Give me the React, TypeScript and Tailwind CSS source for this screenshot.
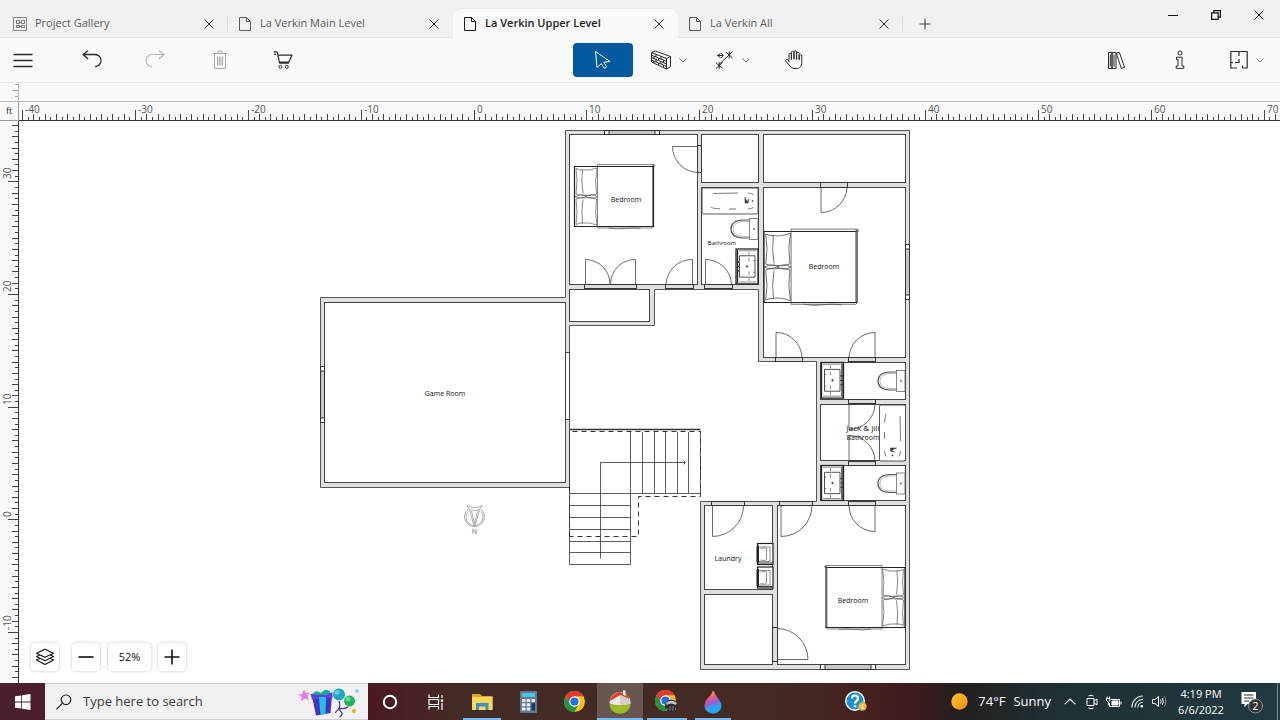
import React from "react";

type Pt = [number, number];

const range = (from: number, to: number) =>
  Array.from({ length: to - from + 1 }, (_, i) => from + i);

/* ---------- Title bar ---------- */

function PageIcon() {
  return (
    <svg width="14" height="16" viewBox="0 0 14 16" fill="none" stroke="currentColor" strokeWidth="1" className="shrink-0">
      <path d="M1.5 1.5H8.5L12.5 5.5V14.5H1.5ZM8.5 1.5V5.5H12.5" />
    </svg>
  );
}

function GalleryIcon() {
  return (
    <svg width="14" height="16" viewBox="0 0 14 16" fill="none" stroke="currentColor" strokeWidth="1" className="shrink-0">
      <path d="M0.5 1.5H13.5V14.5H0.5Z" strokeOpacity=".7" />
      <path d="M3.5 4.5H6.5V7.5H3.5ZM8.5 4.5H11.5V7.5H8.5ZM3.5 9.5H6.5V11.5H3.5ZM8.5 9.5H11.5V11.5H8.5ZM6.5 6.5H8.5M6.5 10.5H8.5" strokeOpacity=".8" />
    </svg>
  );
}

function CrossIcon() {
  return (
    <svg width="10" height="10" viewBox="0 0 10 10" fill="none" stroke="currentColor" strokeWidth="1">
      <path d="M.6.6 9.4 9.4M9.4.6.6 9.4" />
    </svg>
  );
}

function Tab({ label, active, gallery, divider }: { label: string; active?: boolean; gallery?: boolean; divider?: boolean }) {
  return (
    <div
      className={
        "relative flex h-[29px] w-[225px] min-w-0 items-center pr-[11px] pl-2.5 " +
        (active
          ? "-mb-px rounded-t-lg bg-[#f9f9f9] font-semibold text-[#1c1c1c] shadow-[0_-1px_1px_#e9e9e9]"
          : "-mb-px text-[#5c5c5c]")
      }
    >
      <button type="button" role="tab" aria-selected={!!active} className="flex min-w-0 flex-1 items-center gap-2">
        {gallery ? <GalleryIcon /> : <PageIcon />}
        <span className="truncate">{label}</span>
      </button>
      <button type="button" aria-label={"Close " + label} className="flex h-4 w-4 items-center justify-center text-[#2b2b2b]">
        <CrossIcon />
      </button>
      {divider && <span className="absolute top-1.5 right-0 h-4 w-px bg-[#dfdfdf]" />}
    </div>
  );
}

function TitleBar() {
  return (
    <header className="flex h-[38px] shrink-0 items-end justify-between border-b border-[#e6e6e6] bg-[#f1f1f1] text-[11px]">
      <div role="tablist" className="flex min-w-0 items-end pl-[3px]">
        <Tab label="Project Gallery" gallery divider />
        <Tab label="La Verkin Main Level" />
        <Tab label="La Verkin Upper Level" active />
        <Tab label="La Verkin All" divider />
        <button type="button" aria-label="New tab" className="-mb-px flex h-[29px] w-[43px] items-center justify-center text-[#444]">
          <svg width="12" height="12" viewBox="0 0 12 12" stroke="currentColor" strokeWidth="1.1">
            <path d="M6 .5V11.5M.5 6H11.5" />
          </svg>
        </button>
      </div>
      <div className="flex h-full items-start text-[#111]">
        <button type="button" aria-label="Minimize" className="flex h-[30px] w-[43px] items-center justify-center">
          <svg width="10" height="10" viewBox="0 0 10 10" stroke="currentColor"><path d="M0 5.5H10" /></svg>
        </button>
        <button type="button" aria-label="Restore" className="flex h-[30px] w-[43px] items-center justify-center">
          <svg width="10" height="10" viewBox="0 0 10 10" fill="none" stroke="currentColor" strokeWidth="1.2">
            <path d="M.6 2.8H7.2V9.4H.6ZM2.8 2.8V.6H9.4V7.2H7.2" />
          </svg>
        </button>
        <button type="button" aria-label="Close window" className="flex h-[30px] w-[43px] items-center justify-center">
          <CrossIcon />
        </button>
      </div>
    </header>
  );
}

/* ---------- Toolbar ---------- */

function Tool({ label, className, children }: { label: string; className: string; children: React.ReactNode }) {
  return (
    <button type="button" aria-label={label} className={"flex h-[34px] shrink-0 items-center justify-center " + className}>
      {children}
    </button>
  );
}

function Glyph({ children, w = 20 }: { children: React.ReactNode; w?: number }) {
  return (
    <svg width={w} height="20" viewBox={`0 0 ${w} 20`} fill="none" stroke="currentColor" strokeWidth="1" strokeLinejoin="round">
      {children}
    </svg>
  );
}

function Chevron() {
  return (
    <svg width="8" height="6" viewBox="0 0 8 6" fill="none" stroke="#777" strokeWidth="1">
      <path d="M.5 1.5 4 5 7.5 1.5" />
    </svg>
  );
}

function Toolbar() {
  return (
    <nav className="grid h-[45px] shrink-0 grid-cols-[573fr_240fr_467fr] items-center border-b border-[#ebebeb] bg-[#f9f9f9] text-[#2b2b2b]">
      <div className="flex items-center pl-[7px]">
        <Tool label="Menu" className="w-8">
          <Glyph><path d="M.5 4.5H19.5M.5 10.5H19.5M.5 16.5H19.5" strokeWidth="1.3" /></Glyph>
        </Tool>
        <Tool label="Undo" className="ml-[37px] w-8">
          <Glyph><path d="M6 .8 1 4.5 6 9M1.2 4.5H13A5.8 5.8 0 0 1 13 16.6" strokeWidth="1.3" /></Glyph>
        </Tool>
        <Tool label="Redo" className="ml-[31px] w-8 text-[#b5b5b5]">
          <Glyph><path d="M14 .8 19 4.5 14 9M18.8 4.5H7A5.8 5.8 0 0 0 7 16.6" strokeWidth="1.1" /></Glyph>
        </Tool>
        <Tool label="Delete" className="ml-[33px] w-8 text-[#a8a8a8]">
          <Glyph>
            <path d="M3 3.5H17M8 3.5V1.2H12V3.5M4.5 3.5V18.5H15.5V3.5M7.5 6.5V15.5M9.2 6.5V15.5M10.9 6.5V15.5M12.6 6.5V15.5" />
          </Glyph>
        </Tool>
        <Tool label="Cart" className="ml-[31px] w-8">
          <Glyph>
            <path d="M.8 2.4C2.6 1 4.2 1.8 4.6 3.6L6.6 13.2H16M4.9 5.2H19L15.8 12.2 6.4 12.2M1 4.4H3.2" strokeWidth="1.2" />
            <circle cx="7.4" cy="16.8" r="1.5" /><circle cx="13.8" cy="16.8" r="1.5" />
          </Glyph>
        </Tool>
      </div>
      <div className="flex items-center">
        <Tool label="Select" className="w-[60px] rounded bg-[#005a9e] text-white">
          <Glyph><path d="M2.500 1.500 17 11.500 10.800 12.300 13.800 17 11.200 18.400 8.400 13.600 4 17.500Z" /></Glyph>
        </Tool>
        <Tool label="Walls" className="ml-[11px] w-11 gap-[7px] pl-1">
          <Glyph w={22}>
            <path d="M1.5 2.5 16.5 8.5V19L1.500 12ZM1.5 2.5 5.5 1 20.5 6.5 16.5 8.5M20.5 6.5V16.8L16.5 19M1.5 5.2 16.5 11.4M1.5 7.6 16.5 14M1.5 10 16.5 16.4M6 4.3V7M11 6.4V9.2M4 6.3V8.7M8.5 8V10.6M13.5 10V12.6M6 9.5V12M11 11.6V14M4 11V13M8.5 13V15M13.5 15.2V17.5" />
          </Glyph>
          <Chevron />
        </Tool>
        <Tool label="Dimensions" className="ml-6 w-10 gap-[9px]">
          <Glyph w={18}>
            <path d="M3 15.5 14.5 4.5M1 12.8 7.5 18.300M7.500 12.500 1 18.500M4.200 12V19M11 2 17.500 8M17.500 1.500 11 8M14.200 1.500V8.500M2.500 5.500H8M6 3.200 8.500 5.500 6 7.800M5.500 3.500 2.500 5.500 5.500 7.500" />
          </Glyph>
          <Chevron />
        </Tool>
        <Tool label="Pan" className="ml-[26px] w-8">
          <Glyph>
            <path d="M5 11.8V4.6A1.2 1.2 0 0 1 7.4 4.4V9.5 2.6A1.2 1.2 0 0 1 10 2.4V9.2 2A1.2 1.2 0 0 1 12.6 2V9.5 3.5A1.2 1.2 0 0 1 15.2 3.5V9.8 6A1.2 1.2 0 0 1 17.8 6V12.5C17.8 16.5 15.5 18.6 12 18.6 8.500 18.6 7 17.5 5.2 15L1.8 11.2A1.2 1.2 0 0 1 3.4 9.6L5 11" />
          </Glyph>
        </Tool>
      </div>
      <div className="flex items-center justify-end pr-[15px]">
        <Tool label="Library" className="w-8">
          <Glyph>
            <path d="M2.500 2.500H6V18.500H2.500ZM6 2.500H10V18.500H6ZM10.300 3.200 13.300 2.300 18.500 17.300 15.300 18.400ZM8 4.500V16.500M4.300 4.500V16.500" />
          </Glyph>
        </Tool>
        <Tool label="Information" className="ml-8 w-8">
          <Glyph>
            <circle cx="10" cy="3" r="2" />
            <path d="M6.5 7.2H12V16H13.8V18.4H6.2V16H8V9.4H6.5Z" />
          </Glyph>
        </Tool>
        <Tool label="View" className="ml-[33px] w-[36px] gap-2">
          <Glyph w={18}>
            <path d="M7 18H.8V1.5H17.2V18H12.5M9 1.5V6M9 9V12.5H5M.8 12.5H3M12.5 18V15.5" strokeWidth="1.2" />
          </Glyph>
          <Chevron />
        </Tool>
      </div>
    </nav>
  );
}

/* ---------- Rulers ---------- */

function HorizontalRuler() {
  return (
    <svg className="block h-full w-full" aria-label="Horizontal ruler">
      {range(-80, 320).map((h) => {
        const x = Math.round(455.6 + h * 5.643) - 0.5;
        const len = h % 20 === 0 ? 10 : h % 2 === 0 ? 6 : 3;
        return <path key={h} d={`M${x} ${18 - len}V18`} stroke="#444" strokeWidth="1" />;
      })}
      {range(-4, 7).map((t) => (
        <text key={t} x={Math.round(455.6 + t * 112.85) + 2} y="11" fontSize="10" fill="#555">
          {t * 10}
        </text>
      ))}
    </svg>
  );
}

function VerticalRuler() {
  return (
    <svg className="block h-full w-full" aria-label="Vertical ruler">
      {range(-150, 70).map((h) => {
        const y = Math.round(398.3 - h * 5.632) + 0.5;
        const len = h % 20 === 0 ? 10 : h % 2 === 0 ? 6 : 3;
        return <path key={h} d={`M${18 - len} ${y}H18`} stroke="#444" strokeWidth="1" />;
      })}
      {range(-1, 3).map((t) => {
        const y = Math.round(398.3 - t * 112.64) - 2;
        return (
          <text key={t} x="11" y={y} transform={`rotate(-90 11 ${y})`} fontSize="10" fill="#555">
            {t * 10}
          </text>
        );
      })}
    </svg>
  );
}

/* ---------- Floor plan ---------- */

const ROOMS: [number, number, number, number][] = [
  [569.5, 134.5, 697.5, 284.5],
  [701.5, 134.5, 758.5, 182.5],
  [763.5, 134.5, 905.5, 182.5],
  [701.5, 187.5, 758.5, 284.5],
  [763.5, 187.5, 905.5, 357.5],
  [569.5, 289.5, 649.5, 321.5],
  [820.5, 362.5, 905.5, 399.5],
  [820.5, 404.5, 905.5, 460.5],
  [820.5, 465.5, 905.5, 500.5],
  [704.5, 505.5, 772.5, 589.5],
  [704.5, 594.5, 772.5, 664.5],
  [777.5, 505.5, 905.5, 664.5],
  [324.5, 302.5, 565.5, 482.5],
];

const OPENINGS: [number, number, number, number][] = [
  [584.5, 284.5, 636.5, 288.5],
  [665.5, 284.5, 693.5, 288.5],
  [704.5, 284.5, 732.5, 288.5],
  [697.5, 145.5, 701.5, 172.5],
  [820.5, 182.5, 847.5, 187.5],
  [775.5, 357.5, 802.5, 361.5],
  [848.5, 357.5, 875.5, 361.5],
  [848.5, 399.5, 875.5, 403.5],
  [848.5, 461.5, 875.5, 465.5],
  [711.5, 501.5, 744.5, 505.5],
  [779.5, 501.5, 812.5, 505.5],
  [848.5, 501.5, 875.5, 505.5],
  [772.5, 627.5, 777.5, 661.5],
];

/* hinge, end of the open leaf, latch side, sweep flag, radius */
const DOORS: [Pt, Pt, Pt, 0 | 1, number][] = [
  [[585.5, 284], [585.5, 259.5], [610, 284], 1, 24.7],
  [[635.5, 284], [635.5, 259.5], [610.5, 284], 0, 24.7],
  [[692.5, 284], [692.5, 259.5], [666, 284], 0, 26],
  [[705.5, 284], [705.5, 259.5], [731.5, 284], 1, 26],
  [[698, 146.5], [672.5, 146.5], [698, 172.5], 0, 26],
  [[821, 187], [821, 212.5], [847, 187], 0, 26],
  [[776, 357], [776, 332.5], [802, 357], 1, 26],
  [[875, 357], [875, 332.5], [849, 357], 0, 26],
  [[849, 404], [849, 429.5], [875, 404], 0, 26],
  [[849, 461], [849, 435.5], [875, 461], 1, 26],
  [[712.5, 505], [712.5, 536.5], [743.5, 505], 0, 31],
  [[781, 505], [781, 536.5], [812, 505], 0, 31],
  [[875, 505], [875, 531.5], [849, 505], 1, 26],
  [[777, 659.5], [808, 659.5], [777, 628.5], 0, 31],
];

function WindowMark({ x, y, w, h }: { x: number; y: number; w: number; h: number }) {
  const wide = w > h;
  return (
    <g stroke="#333" strokeWidth="1">
      <rect x={x} y={y} width={w} height={h} fill="#fff" />
      {wide ? (
        <rect x={x + 4.5} y={y} width={w - 9} height={h} fill="#c6c6c6" />
      ) : (
        <rect x={x} y={y + 4.5} width={w} height={h - 9} fill="#c6c6c6" />
      )}
    </g>
  );
}

/* Headboard on the left; the local box is 79 by 60. */
function Bed({ transform }: { transform: string }) {
  return (
    <g transform={transform} fill="none" stroke="#555" strokeWidth=".7">
      <rect x="0" y="0" width="79" height="60" fill="#fff" stroke="#222" strokeWidth="1.2" vectorEffect="non-scaling-stroke" />
      <path d="M23 -2H79.5V0M23 -2V61.5H78L79.5 60M34 61.5Q42 63 50 62 60 61 66 62M80.5 0V-1H78V60" />
      <path d="M1.500 2Q5 4 9 3.500 14 4.500 22.500 1.500 20 14 22 27.500 15 30 9 28.500 4 29 1.500 27.500 3.500 14 1.500 2Z" />
      <path d="M1.500 58Q5 56 9 56.500 14 55.500 22.500 58.500 20 46 22 32.500 15 30 9 31.500 4 31 1.500 32.500 3.500 46 1.500 58Z" />
      <path d="M8 3Q6.500 15 8.500 27M8 57Q6.500 45 8.500 33M.5 30Q6 27 12 29.500 6 33 .5 30M11 30Q17 26.500 23 30 17 33.500 11 30" />
    </g>
  );
}

/* Tank on the right; the local box is 28 by 21. */
function Toilet({ x, y }: { x: number; y: number }) {
  return (
    <g transform={`translate(${x} ${y})`} fill="none" stroke="#555" strokeWidth="1">
      <path d="M19 1.5H12Q0 2 0 10.5T12 19.500H19" strokeWidth="1.2" />
      <path d="M18 3H12Q2 3.500 2 10.5T12 18H18" strokeWidth=".4" />
      <rect x="18.5" y="0" width="8.5" height="21" fill="#fff" strokeWidth=".7" />
      <circle cx="23" cy="10.5" r=".7" fill="#333" strokeWidth=".4" />
    </g>
  );
}

/* The local box is 22 by 36. */
function Vanity({ transform }: { transform: string }) {
  return (
    <g transform={transform} fill="none" stroke="#222">
      <rect x="0" y="0" width="22" height="36" fill="#fff" strokeWidth="1.300" />
      <path d="M20.500 1V35" strokeWidth="1.300" />
      <path d="M1.500 1.800H19M1.500 34H19" strokeWidth=".5" />
      <path d="M18.500 7V29H3V7Z" strokeWidth=".8" />
      <path d="M9 3V6M9 9V13M9 23V27M9 30V33M3 12H5M3 24H5" strokeWidth=".5" />
      <circle cx="11" cy="18" r=".8" fill="#222" strokeWidth=".5" />
      <path d="M19 13.500H21M19 18H21M19 22.500H21" strokeWidth="1.200" />
    </g>
  );
}

/* The local box is 56 by 26. */
function Tub({ transform }: { transform: string }) {
  return (
    <g transform={transform} fill="none" stroke="#444" strokeWidth=".9">
      <rect x="0" y="0" width="56" height="26" rx="1.5" fill="#fff" />
      <path d="M11 5.5 36 5M9 19.5Q13 21 18 20.8M27 21H34M46 21Q50 20.5 51.5 19.5M46 5Q50 5.5 51.5 6.5" strokeWidth=".7" />
      <path d="M43 9 45 14 47 11 46 15 43 15Z" fill="#222" strokeWidth=".6" />
      <circle cx="50.5" cy="13" r=".7" fill="#333" strokeWidth=".4" />
    </g>
  );
}

function Appliance({ x, y }: { x: number; y: number }) {
  return (
    <g transform={`translate(${x} ${y})`} fill="none" stroke="#222">
      <rect x="1" y="0" width="15.5" height="21" fill="#fff" strokeWidth="1.2" />
      <path d="M.5 3V19M2 2V19" strokeWidth="1" />
      <path d="M2 3.5H13.5V18H2M4 5Q9 3.5 10 5V16Q9 18 4 16.5" strokeWidth=".5" />
      <path d="M1 19.500H16" strokeWidth=".9" />
    </g>
  );
}

function Stairs() {
  return (
    <g fill="none" stroke="#333" strokeWidth="1">
      <path d="M569.5 429.5H700.5" strokeWidth="1.5" />
      <path d="M569.5 431V564.5H630.5V431M569.5 493.5H700.5M700.5 431V496" strokeWidth=".8" />
      {[642.5, 654.5, 665.5, 677.5, 688.5].map((x) => <path key={x} d={`M${x} 432V493.5`} strokeWidth=".8" />)}
      {[505.5, 517.5, 529.5, 541.5, 552.5].map((y) => <path key={y} d={`M569.5 ${y}H630.5`} strokeWidth=".8" />)}
      <path d="M569.5 536.5V431.5H700.5V496.5H638.5V536.5H569.5" strokeDasharray="5 4" />
      <path d="M600.5 558.5V462.5H685.5M683.5 460.5 685.5 462.5 683.5 464.5" strokeWidth=".8" />
    </g>
  );
}

function Compass() {
  return (
    <g fill="none" stroke="#999" strokeWidth=".8">
      <path d="M468 509A10 10 0 1 0 481 509" />
      <path d="M468 511.5A8.500 8.500 0 1 0 481 511.5" />
      <path d="M467 505.500 469.500 509.500Q474.500 512 479.500 509.500L482 505.500Q474.500 510 467 505.500ZM469.500 510 474.500 527 479.500 510M471.500 511 474.500 524 477.500 511" />
      <text x="474.5" y="534" textAnchor="middle" fontSize="7" fontWeight="600" fill="#999" stroke="none">N</text>
    </g>
  );
}

const LABELS: [string, number, number, number][] = [
  ["Bedroom", 626, 202, 7],
  ["Bedroom", 824, 269, 7],
  ["Bedroom", 853, 603, 7],
  ["Bathroom", 722, 245, 6],
  ["Game Room", 445, 396, 7],
  ["Jack & Jill", 863, 431, 8],
  ["Bathroom", 863, 440, 7],
  ["Laundry", 728, 561, 7],
];

function FloorPlan() {
  return (
    <svg className="block h-full w-full" role="img" aria-label="Upper level floor plan">
      <g transform="translate(-19 -121)">
        <path
          d="M565.5 130.5H909.5V669.5H700.5V501.5H816.5V361.5H758.5V289.5H654.5V325.5H569.5V487.5H320.5V297.5H565.5Z"
          fill="#e0e0e0"
          stroke="#555"
        />
        {ROOMS.map(([x1, y1, x2, y2]) => (
          <rect key={`${x1}-${y1}`} x={x1} y={y1} width={x2 - x1} height={y2 - y1} fill="#fff" stroke="#444" />
        ))}
        <rect x="565.5" y="352.5" width="4" height="67" fill="#fff" stroke="#444" />
        <WindowMark x={604.5} y={130.5} w={55} h={4} />
        <WindowMark x={905.5} y={244.5} w={4} h={55} />
        <WindowMark x={820.5} y={664.5} w={55} h={5} />
        <WindowMark x={320.5} y={366.5} w={4} h={56} />
        {OPENINGS.map(([x1, y1, x2, y2]) => (
          <rect key={`${x1}-${y1}`} x={x1} y={y1} width={x2 - x1} height={y2 - y1} fill="#dcdcdc" stroke="#333" />
        ))}
        <Stairs />
        <Bed transform="translate(574.5 166.5)" />
        <Bed transform="translate(764 231.5) scale(1.177 1.183)" />
        <Bed transform="translate(905 567.5) scale(-1 1)" />
        <Toilet x={731} y={218.5} />
        <Toilet x={878} y={370.5} />
        <Toilet x={878} y={473} />
        <Vanity transform="translate(758 249) scale(-1 .97)" />
        <Vanity transform="translate(821.5 362.5) scale(1 .99)" />
        <Vanity transform="translate(821.5 465.5) scale(1 .97)" />
        <Tub transform="translate(702 188)" />
        <Tub transform="translate(905.5 405) rotate(90)" />
        <Appliance x={756.5} y={543.5} />
        <Appliance x={756.5} y={567} />
        {DOORS.map(([hinge, leaf, latch, sweep, r], i) => (
          <path
            key={i}
            d={`M${hinge.join(" ")}L${leaf.join(" ")}A${r} ${r} 0 0 ${sweep} ${latch.join(" ")}`}
            fill="none"
            stroke="#444"
            strokeWidth=".8"
          />
        ))}
        <Compass />
        {LABELS.map(([text, x, y, size]) => (
          <text key={`${x}-${y}`} x={x} y={y} textAnchor="middle" fontSize={size} fill="#111">
            {text}
          </text>
        ))}
      </g>
    </svg>
  );
}

function ZoomControls() {
  const box = "flex h-7 items-center justify-center rounded-sm bg-white text-[#111] shadow-[0_0_3px_rgba(0,0,0,0.25)]";
  return (
    <div className="absolute bottom-3 left-3 flex items-center">
      <button type="button" aria-label="Layers" className={box + " w-7"}>
        <svg width="20" height="18" viewBox="0 0 20 18" fill="none" stroke="currentColor" strokeWidth="1.1" strokeLinejoin="round">
          <path d="M10 1.2 18.5 5.2 10 9.2 1.5 5.2ZM4.5 7 1.5 8.500 10 12.800 18.500 8.500 15.500 7M4.500 10.500 1.500 12 10 16.500 18.500 12 15.500 10.500" />
        </svg>
      </button>
      <button type="button" aria-label="Zoom out" className={box + " ml-[13px] w-7"}>
        <svg width="16" height="16" viewBox="0 0 16 16" stroke="currentColor" strokeWidth="1.600"><path d="M.5 8H15.500" /></svg>
      </button>
      <output aria-label="Zoom level" className={box + " ml-2 w-[43px] text-[11px]"}>52%</output>
      <button type="button" aria-label="Zoom in" className={box + " ml-[7px] w-7"}>
        <svg width="16" height="16" viewBox="0 0 16 16" stroke="currentColor" strokeWidth="1.600"><path d="M.5 8H15.500M8 .5V15.500" /></svg>
      </button>
    </div>
  );
}

/* ---------- Taskbar ---------- */

function ChromeLogo() {
  return (
    <>
      <circle cx="10.5" cy="10.5" r="10.5" fill="#fbc116" />
      <path d="M1.4 5.25A10.5 10.5 0 0 1 19.6 5.25H10.5L6 13Z" fill="#e33b2e" />
      <path d="M1.4 5.25A10.5 10.5 0 0 0 10.5 21L15 13.1 10.5 15.5 6 13.1Z" fill="#229342" />
      <circle cx="10.5" cy="10.5" r="5.3" fill="#fff" />
      <circle cx="10.5" cy="10.5" r="4.1" fill="#1a73e8" />
    </>
  );
}

function TaskButton({ label, className, running, children }: { label: string; className: string; running?: boolean; children: React.ReactNode }) {
  return (
    <button type="button" aria-label={label} className={"relative flex h-full shrink-0 items-center justify-center " + className}>
      {children}
      {running && <span className="absolute inset-x-1 bottom-0 h-0.5 bg-[#76b9ed]" />}
    </button>
  );
}

function Taskbar() {
  return (
    <footer className="flex h-[37px] shrink-0 items-center bg-[linear-gradient(90deg,#4b202d_0%,#4a1a22_29%,#432c25_36%,#432b24_60%,#45201f_68%,#3f1a1d_71%,#231f1e_75%,#1e3034_82%,#203a40_100%)] text-white">
      <TaskButton label="Start" className="w-[45px]">
        <svg width="16" height="16" viewBox="0 0 16 16" fill="#fff">
          <path d="M0 2.3 6.200 1.400V7.500H0ZM7 1.300 15.500 0V7.500H7ZM0 8.500H6.200V14.600L0 13.700ZM7 8.500H15.500V16L7 14.700Z" />
        </svg>
      </TaskButton>
      <label className="flex h-full w-[323px] min-w-0 items-center border-y border-[#cfcfcf] bg-[#f1f1f1] pr-2 pl-[11px] text-[#222]">
        <svg width="16" height="16" viewBox="0 0 16 16" fill="none" stroke="currentColor" strokeWidth="1.2" className="shrink-0">
          <circle cx="10" cy="5.8" r="4.8" /><path d="M6.5 9.2.5 15.3" />
        </svg>
        <input
          type="search"
          aria-label="Search Windows"
          placeholder="Type here to search"
          className="ml-[11px] min-w-0 flex-1 bg-transparent text-[13px] placeholder:text-[#3c3c3c] focus:outline-none"
        />
        <svg width="62" height="32" viewBox="0 0 62 32" className="shrink-0">
          <path d="M0 8 4 8.500 6 3.500 8 7 12 6.500 9.500 10 11 14 7 12.500 3 15 3.500 11Z" fill="#e27af0" />
          <path d="M14 10H34L32.500 27 18 29.500Z" fill="#4a2fc4" />
          <path d="M12.500 8 34.500 6.500V12L14 13.500Z" fill="#5b3fe0" />
          <path d="M21 11H28L27.500 28 22.500 29Z" fill="#22c3dd" />
          <path d="M15 8Q17 3 23 7 28 1.500 32 5.500L30 9H17Z" fill="#12a5a0" />
          <circle cx="41" cy="8.500" r="6" fill="#1fa6c4" /><circle cx="39" cy="6.500" r="2.500" fill="#5fd0e4" />
          <circle cx="51.500" cy="15" r="5.500" fill="#22b35c" /><circle cx="50" cy="13" r="2.500" fill="#5fe08c" />
          <path d="M41 15Q43 20 40 24 38 25 37.500 27M50 21Q47 23 44 22.500 40 22 43 26 46 28 41.500 31" fill="none" stroke="#43318c" strokeWidth="1.2" />
          <circle cx="59" cy="5" r="1.800" fill="#6fd3ea" /><circle cx="56" cy="25" r="2" fill="#f1a63b" />
        </svg>
      </label>
      <TaskButton label="Cortana" className="w-11">
        <svg width="16" height="16" viewBox="0 0 16 16" fill="none" stroke="#fff" strokeWidth="2"><circle cx="8" cy="8" r="6.2" /></svg>
      </TaskButton>
      <TaskButton label="Task View" className="w-[47px]">
        <svg width="16" height="16" viewBox="0 0 16 16" fill="none" stroke="#fff" strokeWidth="1.2">
          <path d="M1 .5V3.5H10.5V.5M1 15.5V12.5H10.5V15.5M1 5.5H10.500V10.500H1ZM14 1V4M14 9V16" />
          <path d="M12.800 5.500H15.200V7.700H12.800Z" fill="#fff" stroke="none" />
        </svg>
      </TaskButton>
      <TaskButton label="File Explorer" className="w-[46px]" running>
        <svg width="21" height="18" viewBox="0 0 21 18">
          <path d="M0 1H8L10 3H20.5V17H0Z" fill="#e3a32c" />
          <path d="M0 4H20.5V17H0Z" fill="#fbd75b" />
          <path d="M4 17V10H16.5V17H13.5V13.5H7V17Z" fill="#3b8fc4" />
        </svg>
      </TaskButton>
      <TaskButton label="Calculator" className="w-[46px]">
        <svg width="17" height="22" viewBox="0 0 17 22">
          <rect width="17" height="22" rx="1" fill="#66788a" />
          <rect x="2" y="2" width="13" height="4" fill="#4cc3f0" />
          <path d="M2 8H5.5V11H2ZM6.7 8H10.2V11H6.7ZM11.5 8H15V11H11.5ZM2 12.3H5.5V15.3H2ZM6.7 12.3H10.2V15.3H6.7ZM2 16.6H5.5V19.6H2ZM6.7 16.6H10.2V19.6H6.7Z" fill="#e5edf3" />
          <path d="M11.5 12.3H15V19.6H11.5Z" fill="#123e70" />
        </svg>
      </TaskButton>
      <TaskButton label="Google Chrome" className="w-[46px]">
        <svg width="21" height="21" viewBox="0 0 21 21"><ChromeLogo /></svg>
      </TaskButton>
      <TaskButton label="Home Designer" className="w-[46px] bg-white/20">
        <svg width="22" height="24" viewBox="0 0 22 24">
          <circle cx="11" cy="12.500" r="10.500" fill="#ece9e4" />
          <path d="M.5 13.500A10.500 10.500 0 0 0 21.500 13.500Q11 16.500.5 13.500Z" fill="#9db928" />
          <path d="M11 5 11.500 15Q17 15 21.400 13.500 22 7 16 3.500Z" fill="#d3cdc7" />
          <path d="M1.500 8.500Q5 2.500 11 2L19.500 5.500 20.500 9 11.500 5 .8 11Z" fill="#d8442d" />
          <path d="M14 .5H16.500V6L14 5Z" fill="#f4f1ec" />
        </svg>
        <span className="absolute inset-x-0 bottom-0 h-0.5 bg-[#76b9ed]" />
      </TaskButton>
      <TaskButton label="Google Chrome, profile window" className="w-[48px]" running>
        <svg width="24" height="23" viewBox="0 0 24 23">
          <ChromeLogo />
          <circle cx="16.5" cy="16" r="6.5" fill="#2c2a2c" />
          <path d="M11 13Q16 8.5 22 13L20.5 15Q16 12 12 15Z" fill="#c9c4c4" />
          <path d="M12 18V20M15 16V21M18 16V21M20.5 17.5V20" stroke="#8a7f7f" />
        </svg>
      </TaskButton>
      <TaskButton label="Paint 3D" className="w-11" running>
        <svg width="18" height="24" viewBox="0 0 18 24">
          <defs>
            <linearGradient id="drop" x1="0" y1="0" x2=".3" y2="1">
              <stop offset=".1" stopColor="#fbc52f" /><stop offset=".35" stopColor="#f0627a" />
              <stop offset=".6" stopColor="#a355d4" /><stop offset=".8" stopColor="#29a5f0" />
            </linearGradient>
          </defs>
          <path d="M9 .5Q11 4 14.5 9 17.5 13 17.5 16A8.5 7.500 0 0 1 .5 16Q.5 11 5 7 8 4 9 .5Z" fill="url(#drop)" />
        </svg>
      </TaskButton>

      <div className="flex h-full flex-1 items-center justify-end">
        <TaskButton label="Help" className="w-11">
          <svg width="22" height="21" viewBox="0 0 22 21">
            <circle cx="10" cy="10" r="10" fill="#fff" /><circle cx="10" cy="10" r="8.5" fill="#1b8fd0" />
            <path d="M7 7.500Q7 4.500 10 4.500T13 7.500Q13 9 11.500 10 10 11 10 12.500" fill="none" stroke="#fff" strokeWidth="2.2" />
            <circle cx="10" cy="15.3" r="1.3" fill="#fff" />
            <circle cx="17.500" cy="15.500" r="4.200" fill="#f0b13a" /><path d="M17.500 13V18" stroke="#fff4d0" strokeWidth="1.3" />
          </svg>
        </TaskButton>
        <button type="button" className="ml-[73px] flex h-full shrink-0 items-center text-[13px] whitespace-nowrap">
          <svg width="17" height="17" viewBox="0 0 17 17" className="mr-2.5">
            <defs>
              <linearGradient id="sun" x1="0" y1="0" x2="1" y2="1">
                <stop offset="0" stopColor="#fcc52c" /><stop offset="1" stopColor="#f58a17" />
              </linearGradient>
            </defs>
            <circle cx="8.5" cy="8.5" r="8.2" fill="url(#sun)" />
          </svg>
          <span>74°F</span>
          <span className="ml-2">Sunny</span>
        </button>
        <TaskButton label="Show hidden icons" className="ml-2 w-[22px]">
          <svg width="12" height="7" viewBox="0 0 12 7" fill="none" stroke="#fff" strokeWidth="1.2"><path d="M.8 6.2 6 1 11.2 6.2" /></svg>
        </TaskButton>
        <TaskButton label="Meet Now" className="w-[22px]">
          <svg width="12" height="16" viewBox="0 0 12 16" fill="none" stroke="#fff" strokeWidth="1">
            <path d="M1 4.5H8V11.5H1ZM8 7 11 5V11L8 9M2.5 2Q5 .5 7.5 2M2.5 14Q5 15.5 7.5 14" />
          </svg>
        </TaskButton>
        <TaskButton label="Battery" className="w-[22px]">
          <svg width="16" height="12" viewBox="0 0 16 12" fill="none" stroke="#fff" strokeWidth="1">
            <path d="M5 3.5H13.5V10.5H3.5V7" /><path d="M6 5H12V9H6Z" fill="#fff" />
            <path d="M15 5.5V8.5M1 .5V2.5M3.5.5V2.5M.5 2.5H4V4.5L2.3 6 .5 4.5ZM2.3 6V9" />
          </svg>
        </TaskButton>
        <TaskButton label="Network" className="w-[24px]">
          <svg width="13" height="13" viewBox="0 0 13 13" fill="none" stroke="#e6e6e6" strokeWidth="1.1">
            <path d="M.8 12.5A11.5 11.5 0 0 1 12 1M3.8 12.5A8.5 8.5 0 0 1 12 4.2M6.8 12.5A5.5 5.5 0 0 1 12 7.2" />
            <circle cx="10.8" cy="11.2" r="1.3" fill="#fff" stroke="none" />
          </svg>
        </TaskButton>
        <TaskButton label="Volume" className="w-[20px]">
          <svg width="15" height="13" viewBox="0 0 15 13" fill="none" stroke="#fff" strokeWidth="1">
            <path d="M.5 4.5H3L6.5 1.5V11.5L3 8.5H.5ZM8.5 4.5Q9.8 6.5 8.5 8.5M10.3 3Q12.5 6.5 10.3 10" />
            <path d="M12.3 1.3Q15.5 6.5 12.3 11.7" strokeOpacity=".45" />
          </svg>
        </TaskButton>
        <button type="button" className="flex h-full w-16 shrink-0 flex-col items-center justify-center text-[11px] leading-4">
          <time>4:19 PM</time>
          <time>6/6/2022</time>
        </button>
        <TaskButton label="Notifications" className="w-[38px]">
          <svg width="24" height="24" viewBox="0 0 24 24">
            <path d="M1.5 2H16V14H7.5L4.5 17V14H1.5Z" fill="#fff" />
            <path d="M4 5H13.5M4 8H13.5M4 11H9" stroke="#203a40" strokeWidth="1" />
            <circle cx="15.5" cy="16" r="7" fill="#333" stroke="#aaa" strokeWidth=".8" />
            <text x="15.5" y="20" textAnchor="middle" fontSize="11" fill="#fff">2</text>
          </svg>
        </TaskButton>
        <span className="ml-1.5 h-full w-px bg-white/40" />
        <span className="w-0.5" />
      </div>
    </footer>
  );
}

export default function App() {
  return (
    <div className="flex h-screen flex-col overflow-hidden bg-white font-['Open_Sans','Noto_Sans',sans-serif]">
      <TitleBar />
      <Toolbar />
      <main className="grid min-h-0 flex-1 grid-cols-[19px_1fr] grid-rows-[19px_19px_1fr]">
        <div className="border-r border-b border-[#b8b8b8] bg-[#f9f9f9]">
          <svg width="18" height="18" stroke="#aaa"><path d="M15 1.5H18M12 7.5H18M15 13.5H18" /></svg>
        </div>
        <div className="border-b border-[#b8b8b8] bg-[#f9f9f9]" />
        <div className="flex items-center justify-center border-r border-b border-[#999] bg-[#f9f9f9] text-[9px] text-[#222]">ft</div>
        <div className="border-b border-[#333] bg-[#f9f9f9]"><HorizontalRuler /></div>
        <div className="min-h-0 border-r border-[#333] bg-[#f9f9f9]"><VerticalRuler /></div>
        <div className="relative min-h-0 min-w-0">
          <FloorPlan />
          <ZoomControls />
        </div>
      </main>
      <Taskbar />
    </div>
  );
}
